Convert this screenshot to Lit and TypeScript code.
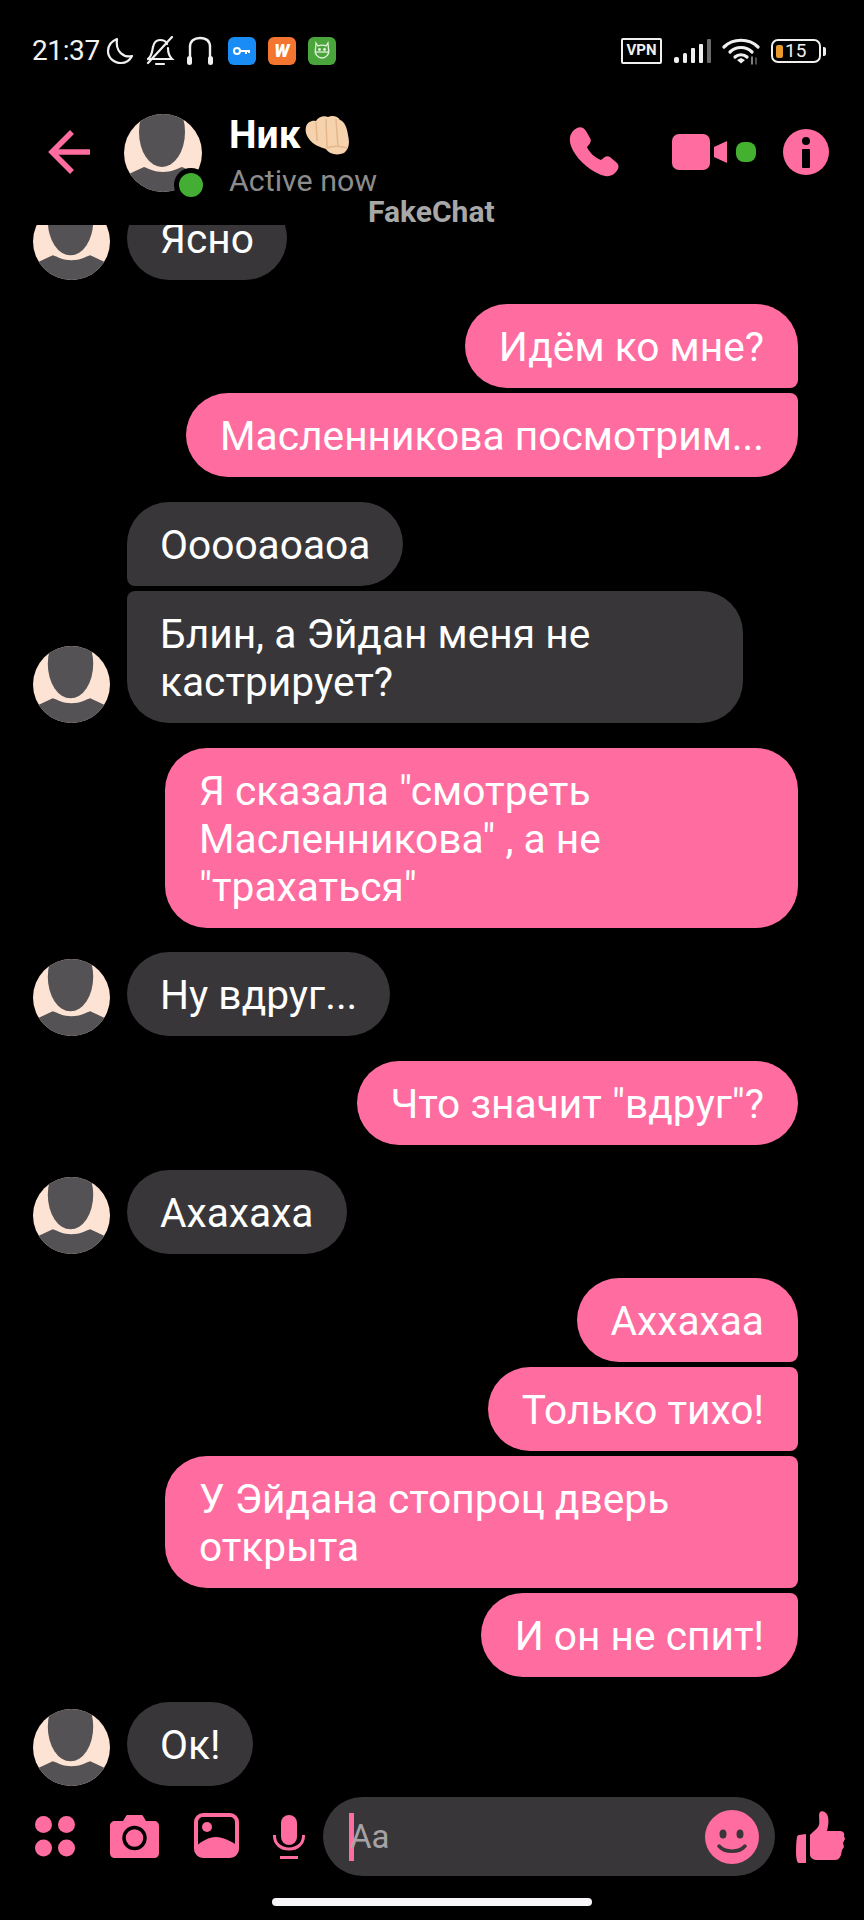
import { LitElement, html, css, svg } from "lit";
import { customElement } from "lit/decorators.js";

type Msg = { t: string; me?: boolean; c: string; av?: boolean; wide?: boolean };

const msgs: Msg[] = [
  { t: "Ясно", c: "solo", av: true },
  { t: "Идём ко мне?", me: true, c: "first gap" },
  { t: "Масленникова посмотрим...", me: true, c: "last near" },
  { t: "Оооoаоаоа".replace("o", "о"), c: "first gap" },
  { t: "Блин, а Эйдан меня не кастрирует?", c: "last near", av: true, wide: true },
  { t: 'Я сказала "смотреть Масленникова" , а не "трахаться"', me: true, c: "solo gap", wide: true },
  { t: "Ну вдруг...", c: "solo gap", av: true },
  { t: 'Что значит "вдруг"?', me: true, c: "solo gap" },
  { t: "Ахахаха", c: "solo gap", av: true },
  { t: "Аххахаа", me: true, c: "first gap" },
  { t: "Только тихо!", me: true, c: "mid near" },
  { t: "У Эйдана стопроц дверь открыта", me: true, c: "mid near", wide: true },
  { t: "И он не спит!", me: true, c: "last near" },
  { t: "Ок!", c: "solo gap", av: true },
];

const avatar = svg`<svg class="av" viewBox="0 0 78 78">
  <defs><clipPath id="ac"><circle cx="39" cy="39" r="39"/></clipPath></defs>
  <g clip-path="url(#ac)">
    <rect width="78" height="78" fill="#fde3d4"/>
    <path d="M0 78V62L7 59L20 53C26 55 30 58 39 58C48 58 52 55 58 53L71 59L78 62V78Z" fill="#545254"/>
    <ellipse cx="38" cy="18" rx="23" ry="35" fill="#545254"/>
  </g></svg>`;

@customElement("app-root")
export class AppRoot extends LitElement {
  static styles = css`
    :host { display: block; position: relative; width: 864px; height: 1920px; background: #000; overflow: hidden; font-family: Roboto, "Noto Sans", sans-serif; color: #fff; }
    .page { display: flex; flex-direction: column; height: 1920px; }
    svg { display: block; flex: none; }

    .status { height: 76px; flex: none; display: flex; align-items: flex-start; padding: 36px 38px 0 32px; box-sizing: border-box; }
    .time { font-size: 28px; line-height: 30px; color: #f2f2f2; letter-spacing: -.4px; margin-right: 6px; }
    .st-left { display: flex; align-items: center; height: 30px; }
    .st-right { display: flex; align-items: center; height: 30px; margin-left: auto; }
    .moon { margin-right: 11px; }
    .bell { margin-right: 10px; }
    .phones { margin-right: 13px; }
    .tile { width: 28px; height: 28px; border-radius: 6px; margin-right: 12px; display: flex; align-items: center; justify-content: center; }
    .blue { background: #1a8cf5; }
    .orange { background: #f4752f; }
    .green { background: #4aa63c; }
    .wmark { font-size: 18px; font-weight: 900; font-style: italic; color: #fff; line-height: 28px; }
    .vpn { width: 41px; height: 26px; box-sizing: border-box; border: 2.5px solid #f0f0f0; border-radius: 2px; font-size: 15px; font-weight: 700; line-height: 21px; text-align: center; color: #f0f0f0; margin-right: 12px; }
    .sig { margin-right: 10px; }
    .wifi { margin-right: 11px; }
    .batt { display: flex; align-items: center; }
    .batt-box { width: 50px; height: 24px; box-sizing: border-box; border: 2.5px solid #f0f0f0; border-radius: 7px; display: flex; align-items: center; padding-left: 3px; gap: 2px; }
    .batt-fill { width: 7px; height: 13px; background: #e8992a; border-radius: 2px; }
    .batt-num { font-size: 19px; line-height: 20px; color: #f0f0f0; }
    .batt-nub { width: 3px; height: 9px; background: #f0f0f0; border-radius: 0 2px 2px 0; margin-left: 2px; }

    .head { height: 149px; flex: none; display: flex; align-items: center; padding: 2px 35px 0 47px; box-sizing: border-box; }
    .back { margin-right: 34px; }
    .hav { position: relative; width: 78px; height: 78px; margin-right: 27px; margin-top: 2px; }
    .av { width: 78px; height: 78px; }
    .dot { position: absolute; left: 50px; top: 54px; width: 24px; height: 24px; border-radius: 50%; background: #44ad33; border: 5px solid #000; }
    .who { display: flex; flex-direction: column; padding-top: 8px; }
    .name { display: flex; align-items: center; font-size: 39px; font-weight: 700; line-height: 44px; gap: 3px; }
    .sub { font-size: 30.400px; line-height: 36px; color: #8c8c8c; margin-top: 6px; }
    .acts { margin-left: auto; display: flex; align-items: center; }
    .call { margin-right: 53px; }
    .vid { margin-right: 4px; }
    .livedot { width: 20px; height: 20px; border-radius: 8px; background: #43b02f; margin-right: 27px; margin-left: 5px; }
    .mark { position: absolute; left: 368px; top: 196px; font-size: 30px; line-height: 32px; font-weight: 700; color: #a8a8a8; }

    .list { flex: 1; min-height: 0; overflow: hidden; display: flex; flex-direction: column; justify-content: flex-end; padding: 0 66px 0 33px; }
    .row { display: flex; align-items: flex-end; flex: none; }
    .row.me { justify-content: flex-end; }
    .row.gap { margin-top: 24.700px; }
    .row.near { margin-top: 5px; }
    .slot { width: 77px; height: 77px; margin-right: 17px; flex: none; }
    .slot .av { width: 77px; height: 77px; }
    .bub { padding: 19px 33px 17px; font-size: 40.700px; line-height: 48px; border-radius: 42px; background: #383639; color: #fff; box-sizing: border-box; }
    .me .bub { background: #ff6c9f; padding: 19px 34px 17px; }
    .wide { width: 616px; }
    .me .wide { width: 633px; }
    .first .bub { border-bottom-left-radius: 8px; }
    .last .bub { border-top-left-radius: 8px; }
    .me.first .bub { border-radius: 42px 42px 8px 42px; }
    .me.mid .bub { border-radius: 42px 8px 8px 42px; }
    .me.last .bub { border-radius: 42px 8px 42px 42px; }

    .comp { height: 134px; flex: none; box-sizing: border-box; padding: 11px 19px 0 35px; display: flex; align-items: flex-start; }
    .i1 { margin-right: 35px; margin-top: 19px; }
    .i2 { margin-right: 35px; margin-top: 18px; }
    .i3 { margin-right: 34px; margin-top: 16px; }
    .i4 { margin-right: 18px; margin-top: 18px; }
    .input { width: 452px; height: 79px; border-radius: 40px; background: #383639; display: flex; align-items: center; padding: 0 16px 0 26px; box-sizing: border-box; margin-right: 21px; }
    .caret { width: 5px; height: 48px; background: #ff6c9f; flex: none; margin-right: -4px; }
    .aa { font-size: 33px; color: #a5a3a6; }
    .smile { margin-left: auto; }
    .like { margin-top: 14px; }
    .home { position: absolute; left: 272px; top: 1898px; width: 320px; height: 8px; border-radius: 4px; background: #f8f6f9; }
  `;

  private statusBar() {
    return html`<div class="status">
      <div class="st-left">
        <span class="time">21:37</span>
        <svg class="moon" width="28" height="28" viewBox="0 0 28 28" fill="none" stroke="#f0f0f0" stroke-width="2.2" stroke-linejoin="round"><path d="M11 2C6 4 2 8 2 14C2 21 8 26 15 26C20 26 24 23 26 19C18 21 9 15 11 2Z"/></svg>
        <svg class="bell" width="30" height="30" viewBox="0 0 30 30" fill="none" stroke="#f0f0f0" stroke-width="2.2" stroke-linecap="round"><path d="M3 23C7 20 7 16 8 11C9 6 12 4 15 4C18 4 21 5 22 8M23 12C23 17 24 20 27 23H3"/><path d="M11 28H19"/><path d="M3 27L27 1"/></svg>
        <svg class="phones" width="30" height="30" viewBox="0 0 30 30" fill="none" stroke="#f0f0f0" stroke-width="2.4"><path d="M5 22V11C5 5 9 2 15 2C21 2 25 5 25 11V22"/><rect x="2" y="20" width="5" height="9" rx="2.5" fill="#f0f0f0" stroke="none"/><rect x="23" y="20" width="5" height="9" rx="2.5" fill="#f0f0f0" stroke="none"/></svg>
        <div class="tile blue"><svg width="18" height="10" viewBox="0 0 18 10" fill="none" stroke="#fff" stroke-width="2"><circle cx="4" cy="5" r="3"/><path d="M7 5H17M13 5V8M16 5V7"/></svg></div>
        <div class="tile orange"><span class="wmark">W</span></div>
        <div class="tile green"><svg width="20" height="20" viewBox="0 0 20 20" fill="none" stroke="#dff0d8" stroke-width="1.3"><path d="M4 2L6 5C8 4 12 4 14 5L16 2L16.5 8C18 13 14 17 10 17C6 17 2 13 3.500 8Z"/><path d="M4 11H16"/><circle cx="7.500" cy="8.500" r=".8" fill="#dff0d8"/><circle cx="12.500" cy="8.500" r=".8" fill="#dff0d8"/></svg></div>
      </div>
      <div class="st-right">
        <div class="vpn">VPN</div>
        <svg class="sig" width="38" height="24" viewBox="0 0 38 24"><rect x="0" y="18" width="5" height="6" rx="2" fill="#f0f0f0"/><rect x="9" y="14" width="4" height="10" rx="1.500" fill="#f0f0f0"/><rect x="17" y="9" width="4" height="15" rx="1" fill="#f0f0f0"/><rect x="25" y="5" width="4" height="19" rx="1" fill="#f0f0f0"/><rect x="33" y="0" width="4" height="24" rx="1" fill="#6a6a6a"/></svg>
        <svg class="wifi" width="38" height="28" viewBox="0 0 38 28" fill="none" stroke="#f0f0f0" stroke-width="3.200" stroke-linecap="round"><path d="M2 10C11 1 27 1 36 10"/><path d="M8 15C14 9 24 9 30 15"/><path d="M13 20C16 17 22 17 25 20"/><path d="M15 23L19 26.500L23 23L19 21Z" fill="#f0f0f0" stroke="none"/><path d="M30 20V27" stroke="#aaa" stroke-width="1.500"/><path d="M34 21V27" stroke="#666" stroke-width="1.500"/></svg>
        <div class="batt"><div class="batt-box"><div class="batt-fill"></div><span class="batt-num">15</span></div><div class="batt-nub"></div></div>
      </div>
    </div>`;
  }

  private header() {
    return html`<div class="head">
      <svg class="back" width="43" height="44" viewBox="0 0 43 44" fill="none" stroke="#ff6c9f" stroke-width="5.500"><path d="M43 22H4"/><path d="M25 2L5 22L25 42"/></svg>
      <div class="hav">${avatar}<div class="dot"></div></div>
      <div class="who">
        <div class="name"><span>Ник</span>
          <svg width="46" height="40" viewBox="0 0 46 40"><path d="M2 12C3 7 8 5 12 6C14 2 20 0 24 2C28 0 34 1 36 5C40 6 43 12 44 20C46 28 45 34 40 38C33 41 25 39 22 34C16 32 9 30 5 24C2 20 1 16 2 12Z" fill="#f6d3ac"/><path d="M12 7L13 26M22 4L23 33M32 4L34 32M23 33C28 31 36 31 43 33" fill="none" stroke="#e2b88c" stroke-width="1.500"/></svg>
        </div>
        <div class="sub">Active now</div>
      </div>
      <div class="acts">
        <svg class="call" width="50" height="50" viewBox="0 0 50 50" fill="#ff6c9f"><path d="M8 1C12 -1 15 1 17 4L21 11C23 14 21 17 18 20C20 25 26 31 32 33C35 31 37 28 41 30L48 36C51 39 49 43 46 46C42 50 36 50 30 47C18 42 6 30 2 19C-1 11 2 4 8 1Z"/></svg>
        <svg class="vid" width="55" height="36" viewBox="0 0 55 36" fill="#ff6c9f"><rect width="38" height="36" rx="7"/><path d="M42 13L55 7V29L42 23Z"/></svg>
        <div class="livedot"></div>
        <svg width="46" height="46" viewBox="0 0 46 46"><circle cx="23" cy="23" r="23" fill="#ff6c9f"/><circle cx="23" cy="12" r="4" fill="#000"/><rect x="19" y="20" width="8" height="19" rx="1" fill="#000"/></svg>
      </div>
    </div>`;
  }

  private composer() {
    return html`<div class="comp">
      <svg class="i1" width="40" height="41" viewBox="0 0 40 41" fill="#ff6c9f"><circle cx="8.500" cy="8.500" r="8.500"/><circle cx="31.500" cy="8.500" r="8.500"/><circle cx="8.500" cy="32" r="8.500"/><circle cx="31.500" cy="32" r="8.500"/></svg>
      <svg class="i2" width="49" height="43" viewBox="0 0 49 43" fill="#ff6c9f"><path d="M5 6H13L16 1C16.500 .3 17 0 18 0H31C32 0 32.500 .3 33 1L36 6H44C47 6 49 8 49 11V38C49 41 47 43 44 43H5C2 43 0 41 0 38V11C0 8 2 6 5 6Z"/><circle cx="24.500" cy="23" r="10.500" fill="none" stroke="#000" stroke-width="3.500"/></svg>
      <svg class="i3" width="45" height="45" viewBox="0 0 45 45"><rect x="2" y="2" width="41" height="41" rx="7" fill="#000" stroke="#ff6c9f" stroke-width="4"/><circle cx="13" cy="14" r="5" fill="#ff6c9f"/><path d="M2 33C8 28 15 24 22 24C29 24 36 28 43 32V38C43 41 41 44 38 44H7C4 44 2 41 2 38Z" fill="#ff6c9f"/></svg>
      <svg class="i4" width="32" height="44" viewBox="0 0 32 44" fill="none" stroke="#ff6c9f" stroke-width="3"><rect x="8" y="0" width="16" height="30" rx="8" fill="#ff6c9f" stroke="none"/><path d="M1.500 20V21C1.500 29 8 34 16 34C24 34 30.500 29 30.500 21V20"/><path d="M7 42.500H25"/></svg>
      <div class="input">
        <div class="caret"></div><span class="aa">Aa</span>
        <svg class="smile" width="54" height="54" viewBox="0 0 54 54"><circle cx="27" cy="27" r="27" fill="#ff6c9f"/><ellipse cx="18" cy="24" rx="3.500" ry="4.500" fill="#383639"/><ellipse cx="35" cy="24" rx="3.500" ry="4.500" fill="#383639"/><path d="M14 36C20 43 34 43 40 36" fill="none" stroke="#383639" stroke-width="3.500" stroke-linecap="round"/></svg>
      </div>
      <svg class="like" width="49" height="52" viewBox="0 0 49 52" fill="#ff6c9f"><path d="M1 26C1 25 2 24 3 24L10 23V52H3C1 52 .3 48 0 42C0 35 .3 30 1 26Z"/><path d="M14 24C16 21 21 19 23 14C24 9 22 4 24 1C26 -1 31 1 32 6C33 11 32 16 31 20H44C47 20 49 22 48 25L49 28L47 32L48 36L46 39L45 44C44 47 42 49 39 49H22C17 49 14 47 14 43Z"/></svg>
    </div>`;
  }

  render() {
    return html`<div class="page">
      ${this.statusBar()}
      ${this.header()}
      <div class="list">
        ${msgs.map((m) => html`<div class="row ${m.me ? "me" : ""} ${m.c}">
          ${m.me ? "" : html`<div class="slot">${m.av ? avatar : ""}</div>`}
          <div class="bub ${m.wide ? "wide" : ""}">${m.t}</div>
        </div>`)}
      </div>
      ${this.composer()}
    </div>
    <div class="mark">FakeChat</div>
    <div class="home"></div>`;
  }
}
